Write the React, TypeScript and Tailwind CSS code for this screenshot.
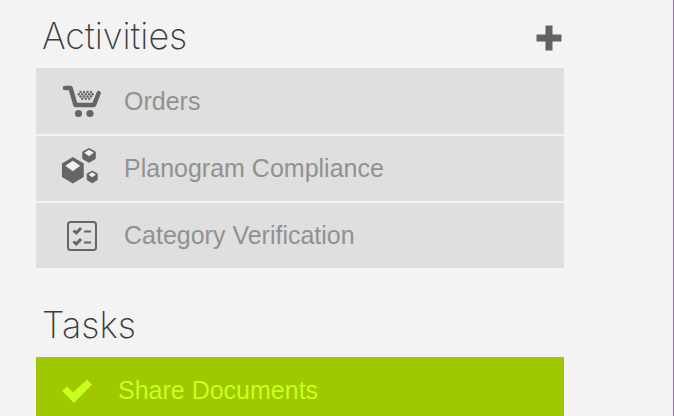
import type { ReactNode } from "react";

const MESH = [
  { y: 8, xs: [18.5, 22, 25.5, 29] },
  { y: 10.2, xs: [16.8, 20.2, 23.8, 27.2, 30.6] },
  { y: 12.5, xs: [18.5, 22, 25.5, 29] },
  { y: 14.7, xs: [20.2, 23.8, 27.2] },
];

function CartIcon() {
  return (
    <svg viewBox="0 0 40 36" className="h-9 w-10" aria-hidden="true">
      <path d="M3 4h5.500l5 17H32l4.700-12" fill="none" stroke="#656565" strokeWidth="4.500" strokeLinecap="round" strokeLinejoin="round" />
      <circle cx="16.5" cy="29.5" r="3.6" fill="#656565" />
      <circle cx="28" cy="29.5" r="3.6" fill="#656565" />
      <g fill="#656565">
        {MESH.map(({ y, xs }) => xs.map((x) => <circle key={`${x}-${y}`} cx={x} cy={y} r="1.2" />))}
      </g>
    </svg>
  );
}

function CubesIcon() {
  return (
    <svg viewBox="0 2 40 40" className="size-10 overflow-visible" aria-hidden="true">
      <g fill="#656565" stroke="#656565" strokeLinejoin="round">
        <path d="M10.800 11 21 16.800v12.700L10.800 35.500.700 29.500V16.800z" strokeWidth="1.500" />
        <path d="M27 1.500 33.200 4.800v7L27 15.300l-6.200-3.500v-7z" />
        <path d="M30.200 24 35.200 26.800v6L30.200 35.800l-5-3v-6z" />
      </g>
      <path d="M10.800 13.700 18.300 18.800 10.800 24.200 3.300 18.800zM27 2.800 31.800 5.800 27 9.200 22.200 5.800zM30.200 25.300 33.800 27.700 30.200 30.200 26.600 27.700z" fill="#efefef" />
    </svg>
  );
}

function ChecklistIcon() {
  return (
    <svg viewBox="0 0 30 30" className="size-[30px]" fill="none" stroke="#656565" aria-hidden="true">
      <rect x="1" y="1" width="28" height="28" rx="2.500" strokeWidth="2" />
      <path d="m6.500 9.500 2.800 2.500 4.700-5M6.500 20.500l2.800 2.500 4.700-5" strokeWidth="3" />
      <path d="M17 10.500h7M17 21.500h7" strokeWidth="2" />
    </svg>
  );
}

function CheckIcon() {
  return (
    <svg viewBox="0 0 30 24" className="h-6 w-[30px]" aria-hidden="true">
      <path d="M0 12 5 7.500l6 6L25 0.500 30 5.500 12 24z" fill="#c8ff1e" />
    </svg>
  );
}

function ActivityRow({ icon, label }: { icon: ReactNode; label: string }) {
  return (
    <li className="border-b-2 border-[#f3f3f3] last:border-b-0">
      <button type="button" className="flex h-[65px] w-full items-center pl-6 text-left text-[25px] text-[#919191]">
        <span className="flex w-16 shrink-0">
          <span className="flex w-11 justify-center">{icon}</span>
        </span>
        <span>{label}</span>
      </button>
    </li>
  );
}

export default function App() {
  return (
    <main className="h-screen overflow-hidden border-r border-[#b45cc0] bg-[#f3f3f3] pr-[109px] pl-9 font-['Liberation_Sans',Arial,sans-serif]">
      <section>
        <header className="flex h-[68px] items-center justify-between pt-1 pl-1.5">
          <h2 className="font-[Inter,sans-serif] text-4xl leading-10 font-extralight text-[#3c3c3c]">Activities</h2>
          <button type="button" aria-label="Add activity" className="mt-1 mr-0.5 flex">
            <svg viewBox="0 0 26 26" className="size-[26px]" aria-hidden="true">
              <path d="M9.500.5h7v9h9v7h-9v9h-7v-9h-9v-7h9z" fill="#626262" />
            </svg>
          </button>
        </header>
        <ul className="bg-[#dfdfdf] pt-px">
          <ActivityRow icon={<CartIcon />} label="Orders" />
          <ActivityRow icon={<CubesIcon />} label="Planogram Compliance" />
          <ActivityRow icon={<ChecklistIcon />} label="Category Verification" />
        </ul>
      </section>
      <section className="mt-5">
        <header className="flex h-[69px] items-center pt-1 pl-1.5">
          <h2 className="font-[Inter,sans-serif] text-4xl leading-10 font-extralight text-[#3c3c3c]">Tasks</h2>
        </header>
        <button type="button" className="flex h-[68px] w-full items-center bg-[#9fc800] pl-6 text-left text-[25px] text-[#c8ff1e]">
          <span className="w-[58px] shrink-0 pl-0.5">
            <CheckIcon />
          </span>
          <span>Share Documents</span>
        </button>
      </section>
    </main>
  );
}
